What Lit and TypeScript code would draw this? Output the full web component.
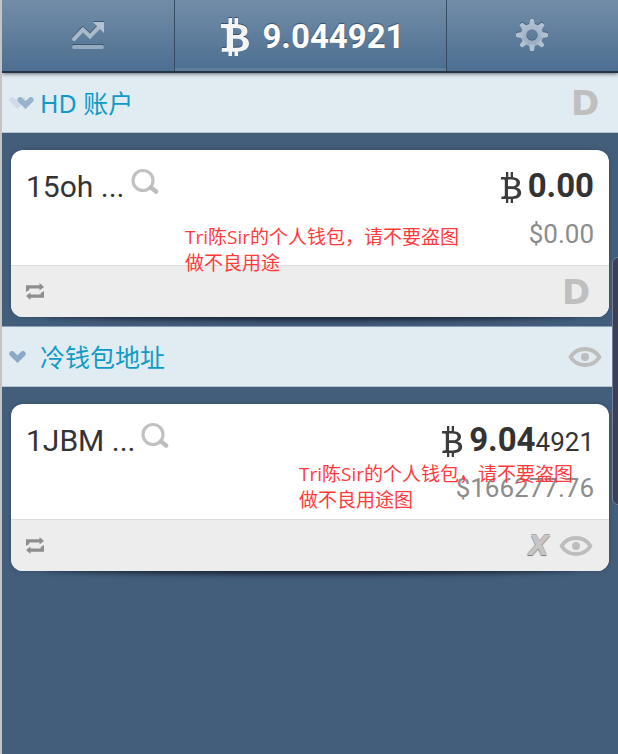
import { LitElement, html, css, svg } from "lit";
import { customElement, property } from "lit/decorators.js";

const trendIcon = html`<svg class="icon" width="34" height="30" viewBox="0 0 34 30" aria-hidden="true">
  <g transform="translate(0 -1)">
    <path d="M3 18 12 8.500l7 7L29 5" fill="none" stroke="#3f5872" stroke-width="4" stroke-linecap="round" />
    <path d="M22 1h11v10z" fill="#3f5872" />
    <rect x="1" y="24" width="32" height="4" rx="2" fill="#3f5872" />
  </g>
  <path d="M3 18 12 8.500l7 7L29 5" fill="none" stroke="#a9bacb" stroke-width="4" stroke-linecap="round" />
  <path d="M22 1h11v11z" fill="#b3c2d1" />
  <rect x="1" y="24" width="32" height="4" rx="2" fill="#97abc0" />
</svg>`;

const teeth = [0, 45, 90, 135, 180, 225, 270, 315];
const gearShape = (fill: string) => svg`<g fill=${fill}>
  <circle cx="16" cy="16" r="8.500" fill="none" stroke=${fill} stroke-width="5.500" />
  ${teeth.map((a) => svg`<path transform=${`rotate(${a} 16 16)`} d="M13 6.500 13.800 1.500Q14 0 15 0h2q1 0 1.200 1.500L19 6.500z" />`)}
</g>`;

const gearIcon = html`<svg class="icon" width="34" height="34" viewBox="-1 0 34 34" aria-hidden="true">
  <defs><linearGradient id="metal" x1="0" y1="0" x2="0" y2="32" gradientUnits="userSpaceOnUse">
    <stop offset="0" stop-color="#b3c3d2" /><stop offset="1" stop-color="#93a8bd" /></linearGradient></defs>
  <g transform="translate(0 -1)">${gearShape("#46617d")}</g>
  ${gearShape("url(#metal)")}
</svg>`;

const bitcoinHeavy = svg`<path fill-rule="evenodd" d="M7.500 0h3.500v6h2.500V0H17v6.200c6 .4 9.500 2.800 9.500 6.800 0 3-1.800 4.800-4.600 5.700 3.900.7 6.100 3 6.100 6.600 0 5-4 8-11 8.300V38h-3.500v-4.300H11V38H7.500v-4.300H.5L1 30h3.200c1 0 1.600-.5 1.600-1.500V11.800C5.800 10.600 5 10 4 10H0V6h7.500zM12 10v7h3.500c3.300 0 5-1.200 5-3.600 0-2.300-1.600-3.400-5-3.400zM12 20.800v8.900h4c3.800 0 5.800-1.500 5.800-4.500 0-2.900-2-4.400-5.800-4.400z" />`;

const bitcoinLight = svg`<path fill-rule="evenodd" d="M5 0h2.300v5h2.400V0H12v5.200c4.200.3 7 2.200 7 5.500 0 2.400-1.400 4-3.600 4.700 3 .6 4.800 2.500 4.800 5.400 0 3.800-3 6-8.200 6.200v4H9.700v-4H7.300v4H5v-4H.3l.3-2.600h2c.8 0 1.200-.4 1.200-1.100V8.900c0-.8-.5-1.300-1.300-1.300H0V5h5zM7 7.600v6.700h3.500c3.300 0 5-1.100 5-3.400 0-2.200-1.700-3.300-5-3.300zM7 16.900v7.500h4c3.600 0 5.500-1.200 5.500-3.800 0-2.500-1.900-3.700-5.500-3.700z" />`;

const chevron = (cls: string) => html`<svg class=${cls} width="17" height="12" viewBox="0 0 17 12" aria-hidden="true">
  <path d="M3 2.800 8.500 8.200l5.500-5.400" fill="none" stroke="currentColor" stroke-width="5.400" stroke-linecap="round" />
</svg>`;

const eyeIcon = html`<svg width="34" height="20" viewBox="0 0 34 20" role="img" aria-label="watch only">
  <path d="M2.500 10C6 4.500 11 2 17 2s11 2.500 14.500 8C28 15.500 23 18 17 18S6 15.500 2.500 10z" fill="none" stroke="#bdbdbd" stroke-width="3.800" stroke-linejoin="round" />
  <circle cx="17" cy="10" r="4" fill="#bdbdbd" />
</svg>`;

const magnifierIcon = html`<svg width="28" height="26" viewBox="0 0 28 26" aria-hidden="true">
  <circle cx="12" cy="12.500" r="10" fill="none" stroke="#c1c1c1" stroke-width="3.200" />
  <path d="M20 19.500 25 23.500" stroke="#bdbdbd" stroke-width="4.500" stroke-linecap="round" />
</svg>`;

const swapIcon = html`<svg width="18" height="17" viewBox="0 0 18 17" aria-hidden="true">
  <path d="M0 9V2.200h13.500V0L18 4l-4.500 3.500V5.500H3.300V7zM18 8v6.800H4.500V17L0 13l4.500-3.500v2h10.200V10z" fill="#8e8e8e" />
</svg>`;

@customElement("wallet-group")
export class WalletGroup extends LitElement {
  @property() label = "";
  @property() kind: "hd" | "watch" = "hd";

  static styles = css`
    :host { display: block; }
    .bar {
      display: flex; align-items: center; width: 100%; height: 60px; box-sizing: border-box;
      margin: 0; padding: 0 16px 0 7px; border: 0; border-bottom: 1px solid #b3c5cd;
      background: #e1ebf2; color: #0f9bc8; text-align: left;
      font: 25px/36px "Noto Sans", "Noto Sans CJK SC", sans-serif;
    }
    :host([kind="watch"]) .bar { border-top: 1px solid #8aa3b8; height: 61px; }
    .arrow { position: relative; display: flex; width: 31px; }
    .chev { color: #8ba9c4; }
    .ghost { color: #cfdce7; }
    .over { position: absolute; left: 8px; top: 0; color: #98b4cc; }
    .title { flex: 1; }
    .mark { width: 34px; display: flex; justify-content: center; }
    .letter { font: 700 34px/36px "DejaVu Sans", sans-serif; color: #bfbfbf; }
    .cards { display: flex; flex-direction: column; padding: 17px 9px 9px; }
  `;

  render() {
    return html`<section>
      <button class="bar" type="button" aria-expanded="true">
        <span class="arrow">${this.kind === "hd" ? [chevron("ghost"), chevron("over")] : chevron("chev")}</span>
        <span class="title">${this.label}</span>
        <span class="mark">${this.kind === "hd" ? html`<span class="letter">D</span>` : eyeIcon}</span>
      </button>
      <div class="cards"><slot></slot></div>
    </section>`;
  }
}

@customElement("address-card")
export class AddressCard extends LitElement {
  @property() address = "";
  @property() major = "";
  @property() minor = "";
  @property() fiat = "";
  @property() kind: "hd" | "watch" = "hd";

  static styles = css`
    :host { display: block; position: relative; z-index: 0; font-family: Roboto, sans-serif; }
    :host::before {
      content: ""; position: absolute; z-index: -1; left: 32px; right: 32px; bottom: 0; height: 12px;
      border-radius: 50%; box-shadow: 0 3px 7px #10182499, 0 1px 5px #101824;
    }
    .card { border-radius: 12px; overflow: hidden; background: #fff; box-shadow: 0 0 4px #2a405899; }
    .body { display: flex; justify-content: space-between; height: 115px; box-sizing: border-box; padding: 16px 15px 0; }
    .who { display: flex; align-items: flex-start; gap: 6px; height: 40px; }
    .address { font-size: 30px; line-height: 42px; color: #333; }
    .find { margin: 2px 0 0; padding: 0; border: 0; background: none; line-height: 0; }
    .sums { display: flex; flex-direction: column; align-items: flex-end; }
    .coins { display: flex; align-items: center; gap: 6px; height: 42px; color: #333; fill: #3c3c3c; }
    .figure { font-size: 26px; line-height: 42px; }
    .figure strong { font-size: 33px; font-weight: 700; }
    .fiat { font-size: 26px; line-height: 32px; margin-top: 10px; color: #8c8c8c; }
    .foot {
      display: flex; align-items: center; gap: 10px; height: 52px; box-sizing: border-box;
      padding: 0 16px 0 15px; border-top: 1px solid #dcdcdc; background: #ededed;
    }
    .swap { margin: 0 auto 0 0; padding: 0; border: 0; background: none; line-height: 0; }
    .mark { width: 34px; display: flex; justify-content: center; }
    .letter { font: 700 34px/36px "DejaVu Sans", sans-serif; color: #bfbfbf; }
    .x { font: italic 700 27px/36px "DejaVu Sans", sans-serif; color: #c6c6c6; text-shadow: 0 1px 1px #777, 0 -1px 0 #aaa; }
  `;

  render() {
    return html`<article class="card">
      <div class="body">
        <div class="who">
          <span class="address">${this.address}</span>
          <button class="find" type="button" aria-label="Show address">${magnifierIcon}</button>
        </div>
        <div class="sums">
          <div class="coins">
            <svg width="21" height="31" viewBox="0 0 21 31" role="img" aria-label="BTC">${bitcoinLight}</svg>
            <span class="figure"><strong>${this.major}</strong>${this.minor}</span>
          </div>
          <div class="fiat">${this.fiat}</div>
        </div>
      </div>
      <div class="foot">
        <button class="swap" type="button" aria-label="Transactions">${swapIcon}</button>
        ${this.kind === "hd"
          ? html`<span class="mark"><span class="letter">D</span></span>`
          : html`<span class="x">X</span><span class="mark">${eyeIcon}</span>`}
      </div>
    </article>`;
  }
}

@customElement("app-root")
export class AppRoot extends LitElement {
  static styles = css`
    :host {
      display: block; position: relative; min-height: 100vh; box-sizing: border-box; overflow: hidden;
      border-left: 2px solid #c4c4c4; background: #435e7b; font-family: Roboto, sans-serif;
    }
    .tabs {
      position: relative; z-index: 1; display: grid; grid-template-columns: 28fr 44fr 28fr; height: 73px; box-sizing: border-box;
      border-bottom: 2px solid #263545; background: linear-gradient(#738da8, #4c6e90);
      box-shadow: 0 1px 4px #0008;
    }
    .tab {
      display: flex; align-items: center; justify-content: center; margin: 0; padding: 0; border: 0;
      background: none; color: #fff; font: 700 33px/40px Roboto, sans-serif;
    }
    .tab + .tab { border-left: 1px solid #364c62; }
    .tab.current {
      gap: 13px; padding: 3px 0 0 5px; box-shadow: inset 0 -3px #5f7f9e; text-shadow: 0 -1px 1px #0006;
    }
    .coin { fill: #f4f4f4; filter: drop-shadow(0 -1px 0 #3b5068); }
    .holder { position: relative; }
    .note {
      position: absolute; z-index: 2; width: 280px; margin: 0; color: #ff3b3b; pointer-events: none;
      font: 19px/26px "Open Sans", "Noto Sans CJK SC", sans-serif;
    }
    .first { left: 174px; top: 74px; }
    .second { left: 288px; top: 57px; }
    .thumb {
      position: absolute; z-index: 3; right: -6px; top: 257px; width: 12px; height: 248px; box-sizing: border-box;
      border: 1px solid #777f92; border-radius: 6px; background: #3b4058;
    }
  `;

  render() {
    return html`
      <nav class="tabs">
        <button class="tab" type="button" aria-label="Market">${trendIcon}</button>
        <button class="tab current" type="button" aria-current="page">
          <svg class="coin" width="28" height="38" viewBox="0 0 28 38" role="img" aria-label="BTC">${bitcoinHeavy}</svg>
          <span>9.044921</span>
        </button>
        <button class="tab" type="button" aria-label="Settings">${gearIcon}</button>
      </nav>
      <main>
        <wallet-group kind="hd" label="HD 账户">
          <div class="holder">
            <address-card kind="hd" address="15oh ..." major="0.00" fiat="$0.00"></address-card>
            <p class="note first">Tri陈Sir的个人钱包，请不要盗图<br />做不良用途</p>
          </div>
        </wallet-group>
        <wallet-group kind="watch" label="冷钱包地址">
          <div class="holder">
            <address-card kind="watch" address="1JBM ..." major="9.04" minor="4921" fiat="$166277.76"></address-card>
            <p class="note second">Tri陈Sir的个人钱包，请不要盗图<br />做不良用途图</p>
          </div>
        </wallet-group>
      </main>
      <div class="thumb"></div>
    `;
  }
}
